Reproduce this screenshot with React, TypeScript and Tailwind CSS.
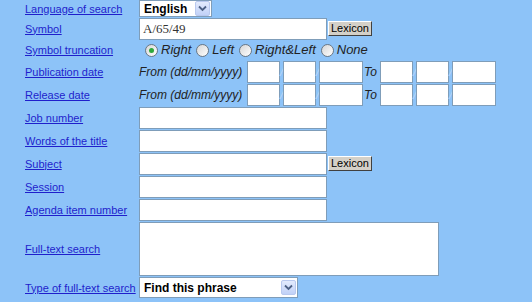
import React from "react";

const box = "box-border h-[22px] border border-[#7f9db9] bg-white outline-none";

function Label({ children }: { children: React.ReactNode }) {
  return (
    <a href="#" className="relative -top-[1px] whitespace-nowrap text-[11px] leading-none text-[#1f1fcc] underline">
      {children}
    </a>
  );
}

function Row({ label, h, children }: { label: string; h: string; children?: React.ReactNode }) {
  return (
    <div className={`flex items-center ${h}`}>
      <div className="w-[114px] shrink-0">
        <Label>{label}</Label>
      </div>
      <div className="flex items-center">{children}</div>
    </div>
  );
}

function Chevron() {
  return (
    <span className="flex h-[15px] w-[15px] items-center justify-center rounded-[2px] border border-[#b9c9ef] bg-linear-to-b from-[#e3ebfd] to-[#c1d1f7]">
      <svg width="9" height="7" viewBox="0 0 9 7">
        <path d="M1 1.5 L4.5 5 L8 1.5" fill="none" stroke="#4d6185" strokeWidth="1.8" />
      </svg>
    </span>
  );
}

function Select({ value, w, h }: { value: string; w: string; h: string }) {
  return (
    <div className={`box-border flex items-center justify-between border border-[#7f9db9] bg-white pl-[4px] pr-[1px] ${w} ${h}`}>
      <span className="text-[12px] font-bold text-black">{value}</span>
      <Chevron />
    </div>
  );
}

function Lexicon() {
  return (
    <button className="ml-[1px] box-border h-[15px] border border-t-white border-l-white border-r-[#404040] border-b-[#404040] bg-[#d4d0c8] px-[2px] text-[11px] leading-none text-black">
      Lexicon
    </button>
  );
}

function Radio({ checked, label }: { checked?: boolean; label: string }) {
  return (
    <span className="flex items-center gap-[3px]">
      <span className="flex h-[13px] w-[13px] items-center justify-center rounded-full border border-[#6a7784] bg-linear-to-br from-[#d6d6d6] to-white">
        {checked && <span className="h-[5px] w-[5px] rounded-full bg-[#2ea83b]" />}
      </span>
      <span className="text-[13px] italic text-[#222]">{label}</span>
    </span>
  );
}

function Slash() {
  return <span className="w-[3px] overflow-visible text-[12px] italic leading-none text-[#b9d6f5]">/</span>;
}

function DateRange() {
  return (
    <div className="flex items-center">
      <span className="w-[108px] text-[12px] italic text-[#222]">From (dd/mm/yyyy)</span>
      <input readOnly className={`${box} w-[33px]`} />
      <Slash />
      <input readOnly className={`${box} w-[33px]`} />
      <Slash />
      <input readOnly className={`${box} w-[44px]`} />
      <span className="mx-[1px] w-[15px] text-[12px] italic text-[#222]">To</span>
      <input readOnly className={`${box} w-[33px]`} />
      <Slash />
      <input readOnly className={`${box} w-[33px]`} />
      <Slash />
      <input readOnly className={`${box} w-[44px]`} />
    </div>
  );
}

export default function App() {
  return (
    <div className="h-[302px] w-[532px] overflow-hidden bg-[#8dc3f8] pl-[25px] font-['Liberation_Sans',Arial,sans-serif]">
      <Row label="Language of search" h="h-[17px]">
        <Select value="English" w="w-[73px]" h="h-[17px]" />
      </Row>
      <Row label="Symbol" h="h-[23px]">
        <input
          readOnly
          defaultValue="A/65/49"
          className={`${box} w-[188px] px-[3px] font-['Liberation_Serif',serif] text-[13px] text-[#333]`}
        />
        <Lexicon />
      </Row>
      <Row label="Symbol truncation" h="h-[20px]">
        <div className="flex items-center gap-[5px] pl-[6px]">
          <Radio checked label="Right" />
          <Radio label="Left" />
          <Radio label="Right&Left" />
          <Radio label="None" />
        </div>
      </Row>
      <Row label="Publication date" h="h-[23px]">
        <DateRange />
      </Row>
      <Row label="Release date" h="h-[23px]">
        <DateRange />
      </Row>
      <Row label="Job number" h="h-[23px]">
        <input readOnly className={`${box} w-[188px]`} />
      </Row>
      <Row label="Words of the title" h="h-[23px]">
        <input readOnly className={`${box} w-[188px]`} />
      </Row>
      <Row label="Subject" h="h-[23px]">
        <input readOnly className={`${box} w-[188px]`} />
        <Lexicon />
      </Row>
      <Row label="Session" h="h-[23px]">
        <input readOnly className={`${box} w-[188px]`} />
      </Row>
      <Row label="Agenda item number" h="h-[23px]">
        <input readOnly className={`${box} w-[188px]`} />
      </Row>
      <Row label="Full-text search" h="h-[55px]">
        <textarea readOnly className="box-border h-[54px] w-[300px] resize-none border border-[#7f9db9] bg-white outline-none" />
      </Row>
      <Row label="Type of full-text search" h="h-[23px]">
        <Select value="Find this phrase" w="w-[159px]" h="h-[21px]" />
      </Row>
    </div>
  );
}
